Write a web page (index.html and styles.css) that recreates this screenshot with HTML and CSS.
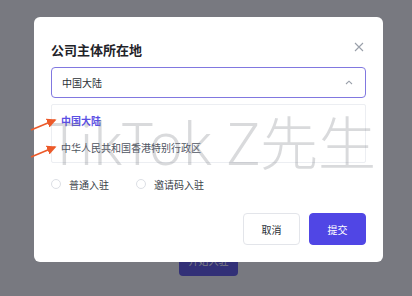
FILE: index.html
```html
<!DOCTYPE html>
<html lang="zh-CN">

<head>
    <meta charset="UTF-8">
    <meta name="viewport" content="width=device-width, initial-scale=1.0">
    <title>公司主体所在地</title>
    <link rel="stylesheet" href="styles.css">
</head>

<body>
    <div class="page">
        <button class="start-btn">开始入驻</button>
    </div>

    <div class="mask">
        <div class="modal">
            <div class="modal-header">
                <div class="modal-title">公司主体所在地</div>
                <svg class="close" width="10" height="10" viewBox="0 0 10 10">
                    <path d="M1 1L9 9M9 1L1 9" stroke="#9aa0aa" stroke-width="1.1" fill="none" />
                </svg>
            </div>

            <div class="select">
                <span>中国大陆</span>
                <svg class="chevron" width="8" height="5" viewBox="0 0 8 5">
                    <path d="M1 4L4 1.2L7 4" stroke="#9aa0aa" stroke-width="1.1" fill="none" />
                </svg>
            </div>

            <div class="dropdown">
                <div class="option active">中国大陆</div>
                <div class="option">中华人民共和国香港特别行政区</div>
            </div>

            <div class="radios">
                <label class="radio"><span class="dot"></span>普通入驻</label>
                <label class="radio"><span class="dot"></span>邀请码入驻</label>
            </div>

            <div class="footer">
                <button class="btn">取消</button>
                <button class="btn primary">提交</button>
            </div>
        </div>
    </div>

    <div class="watermark">TikTok Z先生</div>

    <svg class="arrows" width="412" height="296" viewBox="0 0 412 296">
        <defs>
            <marker id="head" markerWidth="6" markerHeight="6" refX="5" refY="3" orient="auto">
                <path d="M0 0L6 3L0 6Z" fill="#ec5a2a" />
            </marker>
        </defs>
        <path d="M31 130L55 120" stroke="#ec5a2a" stroke-width="1.6" marker-end="url(#head)" />
        <path d="M31 157L55 147" stroke="#ec5a2a" stroke-width="1.6" marker-end="url(#head)" />
    </svg>
</body>

</html>
```

FILE: styles.css
```css
body {
    font-family: "Inter", "Noto Sans CJK SC", sans-serif;
    margin: 0;
    padding: 0;
    width: 412px;
    height: 296px;
    overflow: hidden;
    position: relative;
    background-color: #fafbfd;
}

.page {
    display: flex;
    justify-content: center;
    padding-top: 244px;
}

.start-btn {
    width: 59px;
    height: 32px;
    margin-left: 5px;
    border: none;
    border-radius: 4px;
    background-color: #5b54e8;
    color: #ffffff;
    font-family: inherit;
    font-size: 10px;
}

.mask {
    position: absolute;
    top: 0;
    left: 0;
    width: 100%;
    height: 100%;
    background-color: rgba(18, 20, 30, 0.56);
}

.modal {
    margin: 17px 0 0 34px;
    width: 349px;
    box-sizing: border-box;
    padding: 20px 17px 17px;
    background-color: #ffffff;
    border-radius: 6px;
}

.modal-header {
    display: flex;
    justify-content: space-between;
    align-items: center;
    height: 24px;
}

.modal-title {
    font-size: 13px;
    font-weight: 600;
    color: #1f2329;
}

.close {
    margin-right: 2px;
    margin-top: -4px;
}

.select {
    display: flex;
    justify-content: space-between;
    align-items: center;
    height: 31px;
    margin-top: 6px;
    padding: 0 12px 0 10px;
    box-sizing: border-box;
    border: 1px solid #8178e0;
    border-radius: 4px;
    font-size: 10px;
    color: #2b2f36;
}

.dropdown {
    margin-top: 6px;
    padding: 3px 0 0;
    border: 1px solid #eceef2;
    border-radius: 2px;
    height: 59px;
    box-sizing: border-box;
}

.option {
    height: 27px;
    line-height: 27px;
    padding-left: 9px;
    font-size: 10px;
    color: #4e5461;
}

.option.active {
    color: #5a4fe4;
    font-weight: 700;
}

.radios {
    display: flex;
    gap: 27px;
    height: 20px;
    margin-top: 11px;
    align-items: center;
}

.radio {
    display: flex;
    align-items: center;
    gap: 8px;
    font-size: 10px;
    color: #3a3f48;
}

.dot {
    width: 10px;
    height: 10px;
    box-sizing: border-box;
    border: 1px solid #dcdfe5;
    border-radius: 50%;
}

.footer {
    display: flex;
    justify-content: flex-end;
    gap: 9px;
    margin-top: 19px;
}

.btn {
    width: 57px;
    height: 32px;
    border: 1px solid #e3e5ea;
    border-radius: 4px;
    background-color: #ffffff;
    color: #2b2f36;
    font-family: inherit;
    font-size: 10px;
}

.btn.primary {
    border-color: #5046e5;
    background-color: #5046e5;
    color: #ffffff;
}

.watermark {
    position: absolute;
    left: 49px;
    top: 114px;
    font-family: "Noto Sans", "Noto Sans CJK SC", sans-serif;
    font-size: 58px;
    font-weight: 300;
    line-height: 58px;
    color: rgba(120, 122, 128, 0.28);
    white-space: nowrap;
    pointer-events: none;
}

.arrows {
    position: absolute;
    top: 0;
    left: 0;
    pointer-events: none;
}
```
